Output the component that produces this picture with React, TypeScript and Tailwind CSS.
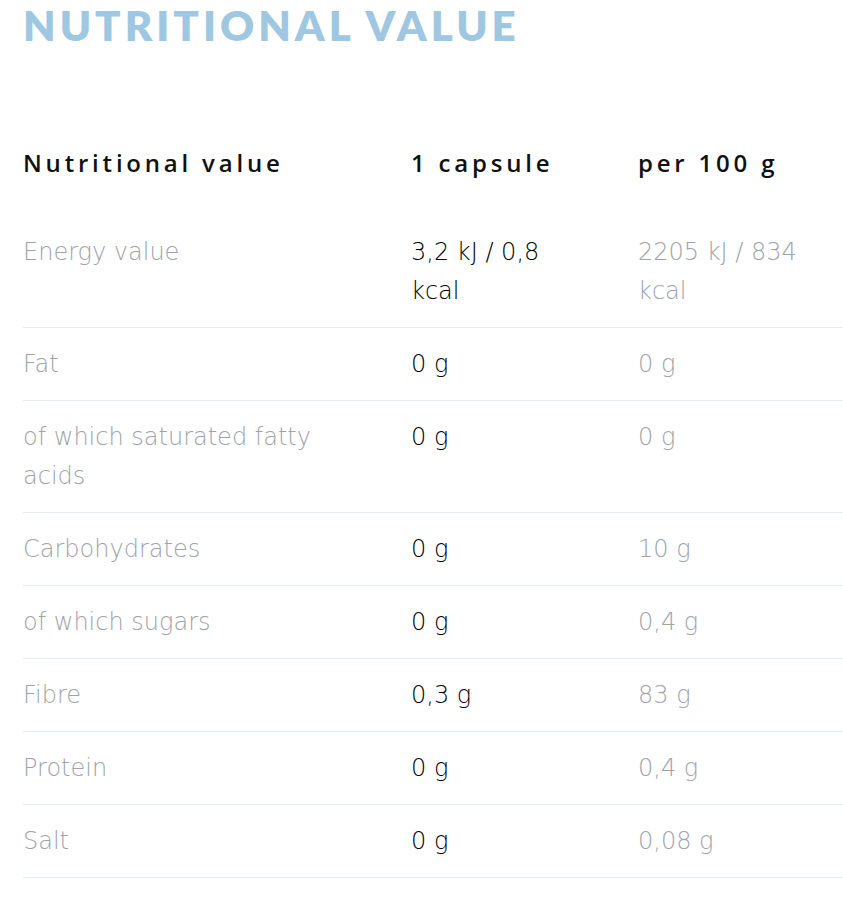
const ROWS = [
  { name: "Energy value", capsule: "3,2 kJ / 0,8 kcal", per100: "2205 kJ / 834 kcal" },
  { name: "Fat", capsule: "0 g", per100: "0 g" },
  { name: "of which saturated fatty acids", capsule: "0 g", per100: "0 g" },
  { name: "Carbohydrates", capsule: "0 g", per100: "10 g" },
  { name: "of which sugars", capsule: "0 g", per100: "0,4 g" },
  { name: "Fibre", capsule: "0,3 g", per100: "83 g" },
  { name: "Protein", capsule: "0 g", per100: "0,4 g" },
  { name: "Salt", capsule: "0 g", per100: "0,08 g" },
];

export default function App() {
  return (
    <div className="w-[843px] h-[899px] bg-white overflow-hidden pl-[23px] font-['Open_Sans',sans-serif]">
      <h1 className="text-[42px] leading-[50px] font-extrabold tracking-[4px] text-[#a0c7e1] font-['Lato',sans-serif]">
        NUTRITIONAL VALUE
      </h1>

      {/* header */}
      <div className="grid grid-cols-[388px_227px_1fr] mt-[93px] pb-[34px] text-[24px] leading-[39px] font-semibold tracking-[3.8px] text-[#111]">
        <div>Nutritional value</div>
        <div>1 capsule</div>
        <div>per 100 g</div>
      </div>

      <div className="font-['DejaVu_Sans',sans-serif]">
        {ROWS.map((r) => (
          <div
            key={r.name}
            className="grid grid-cols-[388px_227px_1fr] pt-[17px] pb-[16px] border-b border-[#e2eef6] text-[24px] leading-[39px] font-extralight"
          >
            <div className="pr-[60px] text-[#9ea3a9]">{r.name}</div>
            <div className="pr-[60px] text-black">{r.capsule}</div>
            <div className="pr-[10px] text-[#9ea3a9]">{r.per100}</div>
          </div>
        ))}
      </div>
    </div>
  );
}
